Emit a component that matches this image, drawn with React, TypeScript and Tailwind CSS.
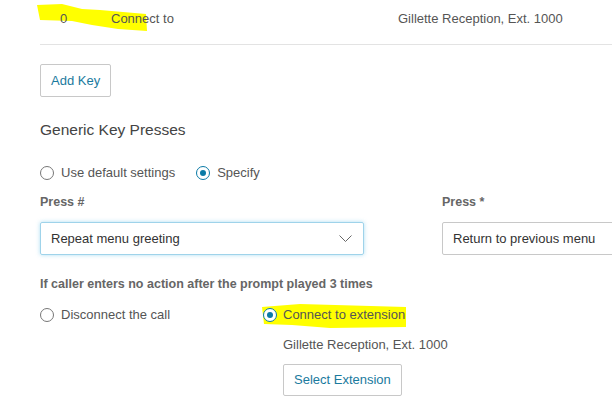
import React from "react";

function Radio({ checked }: { checked?: boolean }) {
  return (
    <span
      className={`relative inline-flex h-[14px] w-[14px] shrink-0 items-center justify-center rounded-full border ${
        checked ? "border-[#0a7aa6]" : "border-[#777]"
      } bg-white`}
    >
      {checked && <span className="h-[6px] w-[6px] rounded-full bg-[#0a7aa6]" />}
    </span>
  );
}

export default function App() {
  return (
    <div
      className="relative h-[412px] w-[612px] overflow-hidden bg-white text-[13px] leading-[16px] text-[#555]"
      style={{ fontFamily: "'Liberation Sans', Arial, sans-serif" }}
    >
      {/* highlighter marks */}
      <svg className="absolute left-0 top-0" width="612" height="412">
        <path
          d="M37 5 L62 4 L82 9 L100 10 L146 14 L147 31 L118 29 L92 25 L72 21 L40 20 Z"
          fill="#ffff00"
        />
        <path
          d="M262 307 L300 304 L406 307 L406 327 L330 328 L292 325 L264 324 Z"
          fill="#ffff00"
        />
      </svg>

      <div className="relative pl-[40px]">
        {/* top row */}
        <div className="flex h-[45px] items-start border-b border-[#e3e3e3] pt-[11px]">
          <span className="w-[71px] shrink-0 pl-[20px]">0</span>
          <span className="w-[287px] shrink-0">Connect to</span>
          <span>Gillette Reception, Ext. 1000</span>
        </div>

        <div className="pt-[19px]">
          <button className="h-[33px] rounded-[2px] border border-[#c8c8c8] bg-white px-[10px] text-[13px] leading-[16px] text-[#1a7a9e]">
            Add Key
          </button>
        </div>

        <div className="mt-[23px] text-[15.5px] leading-[20px] text-[#444]">Generic Key Presses</div>

        <div className="mt-[25px] flex h-[16px] items-center">
          <Radio />
          <span className="ml-[7px]">Use default settings</span>
          <span className="ml-[21px] flex items-center">
            <Radio checked />
            <span className="ml-[7px]">Specify</span>
          </span>
        </div>

        <div className="mt-[14px] flex">
          <div className="w-[402px] shrink-0">
            <div className="text-[12.5px] font-bold leading-[14px] text-[#666]">Press #</div>
            <div className="mt-[13px] flex h-[33px] w-[324px] items-center justify-between rounded-[2px] border border-[#9fd3ea] px-[10px] text-[#333] shadow-[0_0_4px_rgba(120,200,235,0.6)]">
              <span>Repeat menu greeting</span>
              <svg width="13" height="8" viewBox="0 0 13 8" className="mr-[1px]">
                <path d="M0.5 0.5 L6.5 6.5 L12.5 0.5" fill="none" stroke="#666" strokeWidth="1" />
              </svg>
            </div>
          </div>
          <div className="shrink-0">
            <div className="text-[12.5px] font-bold leading-[14px] text-[#666]">Press *</div>
            <div className="mt-[13px] flex h-[33px] w-[200px] items-center rounded-[2px] border border-[#c8c8c8] px-[10px] text-[#333]">
              <span>Return to previous menu</span>
            </div>
          </div>
        </div>

        <div className="mt-[22px] text-[12.5px] font-bold leading-[14px] text-[#666]">
          If caller enters no action after the prompt played 3 times
        </div>

        <div className="mt-[16px] flex h-[16px] items-center">
          <span className="flex w-[223px] shrink-0 items-center">
            <Radio />
            <span className="ml-[7px]">Disconnect the call</span>
          </span>
          <span className="flex items-center">
            <Radio checked />
            <span className="ml-[6px]">Connect to extension</span>
          </span>
        </div>

        <div className="ml-[243px]">
          <div className="mt-[14px]">Gillette Reception, Ext. 1000</div>
          <button className="mt-[11px] h-[32px] rounded-[2px] border border-[#c8c8c8] bg-white px-[10px] text-[13px] leading-[16px] text-[#1a7a9e]">
            Select Extension
          </button>
        </div>
      </div>
    </div>
  );
}
